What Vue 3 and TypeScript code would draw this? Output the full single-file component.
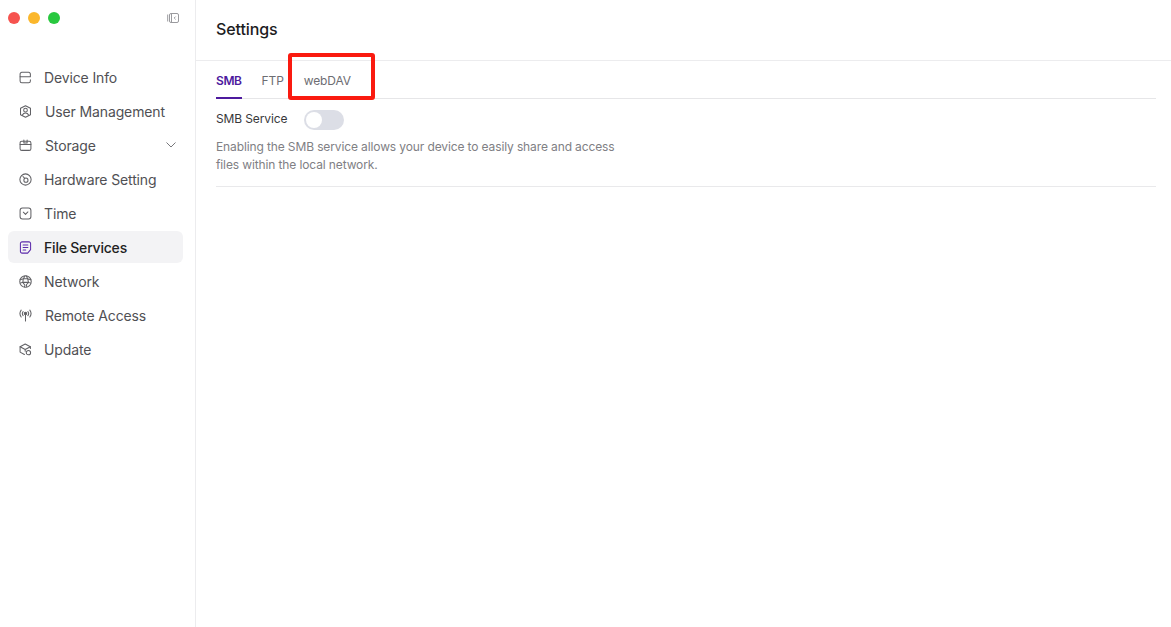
<script setup lang="ts">
interface NavItem {
  label: string
  icon: string
  gap: number
  active?: boolean
  chevron?: boolean
}

const items: NavItem[] = [
  { label: 'Device Info', icon: 'device', gap: 12 },
  { label: 'User Management', icon: 'user', gap: 13 },
  { label: 'Storage', icon: 'storage', gap: 13, chevron: true },
  { label: 'Hardware Setting', icon: 'hardware', gap: 12 },
  { label: 'Time', icon: 'time', gap: 12 },
  { label: 'File Services', icon: 'file', gap: 12, active: true },
  { label: 'Network', icon: 'network', gap: 12 },
  { label: 'Remote Access', icon: 'remote', gap: 13 },
  { label: 'Update', icon: 'update', gap: 12 },
]
</script>

<template>
  <div class="app">
    <aside class="sidebar">
      <div class="titlebar">
        <div class="lights">
          <span class="light red"></span>
          <span class="light yellow"></span>
          <span class="light green"></span>
        </div>
        <svg class="collapse" viewBox="0 0 12 12" width="12" height="12" fill="none" stroke="#9a9a9e" stroke-width="1">
          <rect x="2.500" y="1.500" width="9" height="9" rx="1.500" />
          <path d="M0.700 2.500v7M4.500 1.500v9M8.600 4.600 7.200 6l1.400 1.400" />
        </svg>
      </div>
      <nav class="nav">
        <div v-for="item in items" :key="item.label" class="nav-item" :class="{ active: item.active }" :style="{ gap: item.gap + 'px' }">
          <svg class="icon" viewBox="0 0 12 12" width="13" height="13" fill="none" stroke="currentColor" stroke-width="0.95" stroke-linecap="round" stroke-linejoin="round">
            <template v-if="item.icon === 'device'">
              <path d="M2.600 1.200h6.300a1.600 1.600 0 0 1 1.600 1.600V5.400H1V2.800A1.600 1.600 0 0 1 2.600 1.200Z" />
              <path d="M1 5.400v3.800A1.600 1.600 0 0 0 2.600 10.800h6.300a1.600 1.600 0 0 0 1.600-1.600V8.200" />
            </template>
            <template v-else-if="item.icon === 'user'">
              <path d="M6 .7 10.600 3v6L6 11.300 1.400 9V3Z" />
              <circle cx="6" cy="4.800" r="1.700" />
              <path d="M3.200 9.200C3.800 7.800 4.800 7.400 6 7.400s2.200.4 2.800 1.800" />
            </template>
            <template v-else-if="item.icon === 'storage'">
              <rect x="1" y="2" width="10" height="8.500" rx="1.600" />
              <path d="M1 5h10M4.500 1v2.600M7.500 1v2.600M4.500 3.600h3" />
            </template>
            <template v-else-if="item.icon === 'hardware'">
              <circle cx="6" cy="6" r="5.200" />
              <circle cx="6.400" cy="6.600" r="1.900" />
              <path d="M3.700 3.200 5.200 5" />
            </template>
            <template v-else-if="item.icon === 'time'">
              <rect x="1" y="1" width="10" height="10" rx="2.200" />
              <path d="M4 4.800 6 6.800 8.200 4.600" />
            </template>
            <template v-else-if="item.icon === 'file'">
              <path d="M2.800 .8h6.400a1.500 1.500 0 0 1 1.500 1.500v5.700L8 11.200H2.800a1.500 1.500 0 0 1-1.500-1.500V2.300A1.500 1.500 0 0 1 2.800 .8Z" />
              <path d="M3.800 3.700h4.400M3.800 6h4.400M3.800 8.300h2.400" />
            </template>
            <template v-else-if="item.icon === 'network'">
              <circle cx="6" cy="6" r="5.300" />
              <path d="M1 4.300 4 3.400 5.500 1M11 4.400 8 3.500 6.800 .9M4 3.400 3.500 6.800 5.500 9.500 5 11M8 3.500 8.800 6.800 6.800 9 7.200 11M3.500 6.800 8.800 6.800M1.200 7.500 3.500 6.800M10.800 7.500 8.800 6.800M4 3.400H8" />
            </template>
            <template v-else-if="item.icon === 'remote'">
              <circle cx="6" cy="4.200" r="1.100" fill="currentColor" />
              <path d="M6 5.300V11M3.800 2.400a3 3 0 0 0 0 3.700M8.200 2.400a3 3 0 0 1 0 3.700M2 1a5.500 5.500 0 0 0 0 6.400M10 1a5.500 5.500 0 0 1 0 6.400" />
            </template>
            <template v-else>
              <path d="M10.500 5V3.400L5.700 .9 1 3.400v5l4 2.200" />
              <path d="M1 3.400 5.700 6l4.800-2.600M5.700 6v1.500" />
              <circle cx="8.700" cy="8.900" r="2" />
            </template>
          </svg>
          <span class="label">{{ item.label }}</span>
          <svg v-if="item.chevron" class="chevron" viewBox="0 0 10 6" width="10" height="6" fill="none" stroke="#77777b" stroke-width="1">
            <path d="M.5 .5 5 5 9.500 .5" />
          </svg>
        </div>
      </nav>
    </aside>
    <main class="main">
      <header class="header">Settings</header>
      <div class="content">
        <div class="tabs">
          <div class="tab current">SMB</div>
          <div class="tab">FTP</div>
          <div class="tab webdav">webDAV</div>
        </div>
        <div class="service">
          <div class="service-row">
            <span class="service-name">SMB Service</span>
            <span class="toggle"><span class="knob"></span></span>
          </div>
          <p class="description">Enabling the SMB service allows your device to easily share and access files within the local network.</p>
        </div>
      </div>
      <div class="highlight"></div>
    </main>
  </div>
</template>

<style>
html, body {
  margin: 0;
  background: #fff;
}
</style>

<style scoped>
.app {
  display: flex;
  width: 1171px;
  height: 627px;
  overflow: hidden;
  background: #fff;
  font-family: Inter, "Liberation Sans", sans-serif;
  color: #333;
}
.sidebar {
  box-sizing: border-box;
  flex: 0 0 196px;
  border-right: 1px solid #ececee;
}
.titlebar {
  display: flex;
  align-items: center;
  justify-content: space-between;
  height: 36px;
  padding: 0 16px 0 8px;
}
.lights {
  display: flex;
  gap: 8px;
}
.light {
  width: 12px;
  height: 12px;
  border-radius: 50%;
}
.red { background: #f6534f; }
.yellow { background: #fbb72c; }
.green { background: #29c83f; }
.collapse { display: block; }
.nav {
  display: flex;
  flex-direction: column;
  gap: 2px;
  margin-top: 25px;
  width: 175px;
  margin-left: 8px;
}
.nav-item {
  display: flex;
  align-items: center;
  height: 32px;
  padding: 0 7px 0 11px;
  border-radius: 6px;
  font-size: 14px;
  letter-spacing: -0.13px;
  color: #505054;
}
.nav-item.active {
  background: #f3f3f5;
  color: #222;
  font-weight: 500;
  letter-spacing: -0.2px;
}
.nav-item.active .icon { color: #5c2bab; }
.icon {
  flex: none;
  color: #616165;
}
.label { flex: 1; }
.chevron { flex: none; }
.main {
  position: relative;
  flex: 1;
  min-width: 0;
}
.header {
  box-sizing: border-box;
  height: 61px;
  padding: 20px 20px 0;
  border-bottom: 1px solid #ececee;
  font-size: 16px;
  line-height: 18px;
  font-weight: 500;
  letter-spacing: -0.1px;
  color: #1c1c1e;
}
.content { padding: 0 15px 0 20px; }
.tabs {
  display: flex;
  gap: 20px;
  height: 38px;
  box-sizing: border-box;
  border-bottom: 1px solid #e6e6e8;
}
.tab {
  height: 38px;
  box-sizing: border-box;
  padding-top: 12px;
  font-size: 12px;
  line-height: 15px;
  letter-spacing: -0.12px;
  color: #6d6d72;
}
.tab.current {
  color: #4d1a9e;
  font-weight: 600;
  letter-spacing: -0.4px;
  border-bottom: 2px solid #4d1a9e;
}
.service {
  height: 88px;
  box-sizing: border-box;
  border-bottom: 1px solid #e9e9eb;
}
.service-row {
  display: flex;
  align-items: center;
  gap: 17px;
  padding-top: 11px;
}
.service-name {
  font-size: 12px;
  letter-spacing: -0.12px;
  color: #38383b;
  margin-bottom: 3px;
}
.toggle {
  display: block;
  box-sizing: border-box;
  width: 40px;
  height: 20px;
  padding: 2px;
  border-radius: 10px;
  background: #dcdee6;
}
.knob {
  display: block;
  width: 16px;
  height: 16px;
  border-radius: 50%;
  background: #fff;
}
.description {
  width: 410px;
  margin: 8px 0 0;
  font-size: 12px;
  line-height: 18px;
  letter-spacing: -0.12px;
  color: #808084;
}
.highlight {
  position: absolute;
  left: 92px;
  top: 53px;
  box-sizing: border-box;
  width: 87px;
  height: 47px;
  border: 4px solid #fa1a10;
  border-radius: 3px;
}
</style>
